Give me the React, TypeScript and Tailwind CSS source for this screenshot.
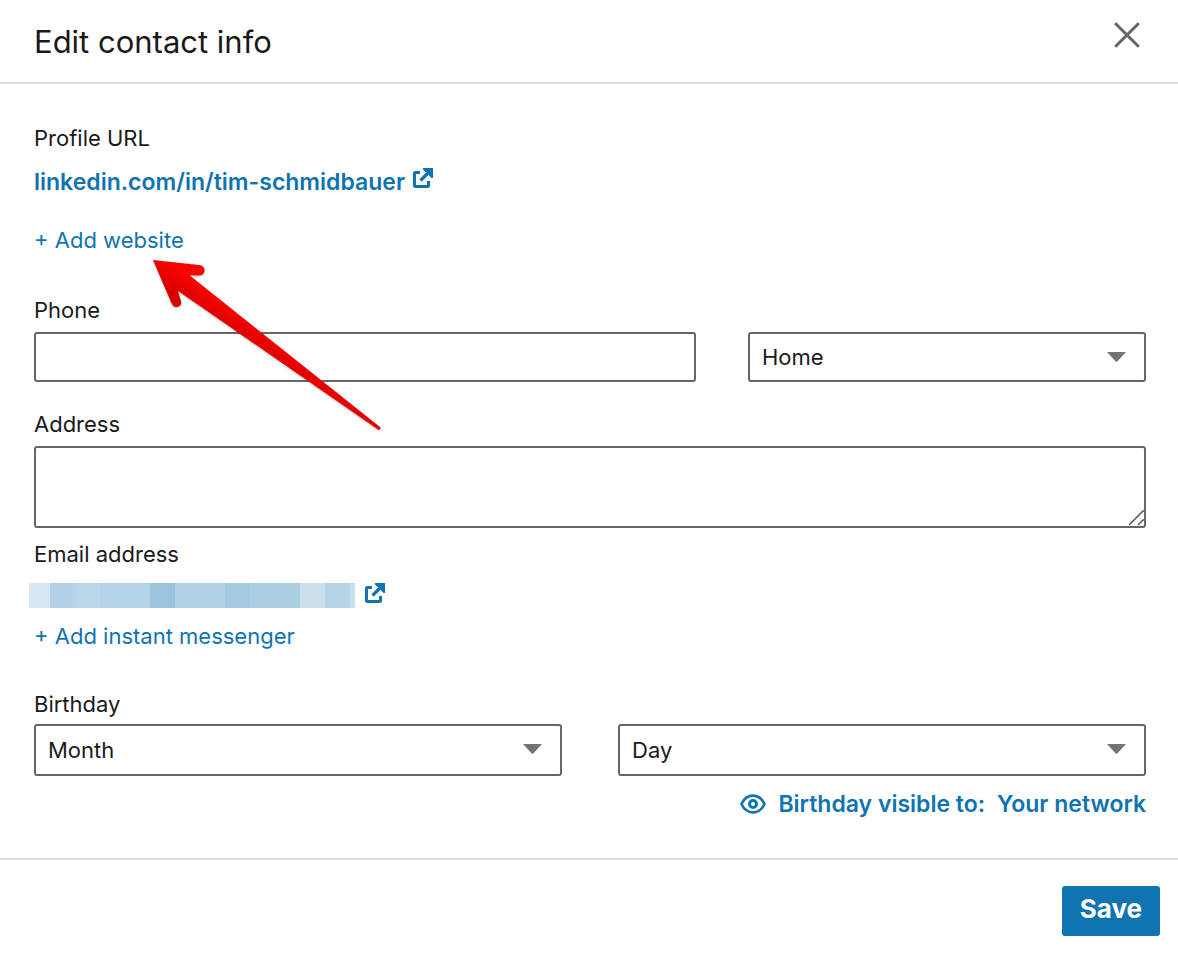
import { useState, type SelectHTMLAttributes } from 'react'

const MONTHS = ['January', 'February', 'March', 'April', 'May', 'June', 'July', 'August', 'September', 'October', 'November', 'December']
const DAYS = Array.from({ length: 31 }, (_, i) => String(i + 1))

function ExternalLinkIcon() {
  return (
    <svg className="w-5 h-5 shrink-0" viewBox="0 0 20 20" fill="none" stroke="currentColor" strokeWidth="3" aria-hidden="true">
      <path d="M7 4.500H2.500a1 1 0 0 0-1 1v12a1 1 0 0 0 1 1h12a1 1 0 0 0 1-1v-4.500" />
      <path d="M7.500 12.500 17 3" strokeWidth="3.200" />
      <path d="M10 0h10v10h-1.500l-2.500-2.500V4h-3.500L10 1.500z" fill="currentColor" stroke="none" />
    </svg>
  )
}

function EyeIcon() {
  return (
    <svg className="w-[26px] h-5 shrink-0" viewBox="0 0 26 20" fill="none" stroke="currentColor" aria-hidden="true">
      <path d="M1.500 10C4 4.500 8.200 1.600 13 1.600S22 4.500 24.500 10C22 15.500 17.800 18.400 13 18.400S4 15.500 1.500 10z" strokeWidth="2.600" />
      <circle cx="13" cy="10" r="3.500" strokeWidth="3" />
    </svg>
  )
}

function Arrow() {
  return (
    <svg
      className="absolute top-[33px] left-[118px] w-[232px] h-[174px] pointer-events-none drop-shadow-[0_1px_1px_rgba(0,0,0,0.25)]"
      viewBox="0 0 232 174"
      aria-hidden="true"
    >
      <defs>
        <linearGradient id="arrow-fill" gradientUnits="userSpaceOnUse" x1="72" y1="44" x2="60" y2="61">
          <stop offset="0" stopColor="#f50404" />
          <stop offset="1" stopColor="#d90000" />
        </linearGradient>
      </defs>
      <path
        d="M1 1 47 6C51 6.500 53 9 52.500 12S50 16.500 46.500 16.500L37.500 16.300 228 168C229.500 169.500 227.800 171.500 226 170.500L25.800 31.700 29 42C29.800 45 28 47.500 25 48S20.500 46.500 19 43z"
        fill="url(#arrow-fill)"
      />
    </svg>
  )
}

function Select({ label, options, className = '', ...props }: SelectHTMLAttributes<HTMLSelectElement> & { label: string; options: string[] }) {
  return (
    <div className="relative">
      <select
        aria-label={label}
        className={`block w-full appearance-none rounded-[3px] border-2 border-[#666] bg-white pl-3 pr-12 ${className}`}
        {...props}
      >
        {options.map((option) => (
          <option key={option}>{option}</option>
        ))}
      </select>
      <svg className="absolute right-5 top-5 w-[19px] h-[10px] pointer-events-none" viewBox="0 0 19 10" aria-hidden="true">
        <path d="M0 0h19l-8.500 9.300q-1 .9-2 0z" fill="#737373" />
      </svg>
    </div>
  )
}

// The address is redacted, so only coloured blocks are shown
function RedactedEmail() {
  return (
    <span role="img" aria-label="Hidden email address" className="flex w-[326px] h-[25px] -ml-[5px]">
      <span className="w-[21px] bg-[#d6e7f1]" />
      <span className="w-[25px] bg-[#b4d2e7]" />
      <span className="w-[25px] bg-[#bbd6e8]" />
      <span className="w-[50px] bg-[#b3d3e6]" />
      <span className="w-[25px] bg-[#9bc3de]" />
      <span className="w-[50px] bg-[#b1d1e5]" />
      <span className="w-[25px] bg-[#a5c9e0]" />
      <span className="w-[50px] bg-[#abcee3]" />
      <span className="w-[25px] bg-[#cbe0ed]" />
      <span className="w-[25px] bg-[#b4d3e6]" />
      <span className="w-[5px] bg-[#c9dfec]" />
    </span>
  )
}

export default function App() {
  const [phone, setPhone] = useState('')
  const [address, setAddress] = useState('')

  return (
    <form
      className="min-h-screen bg-white font-['Inter','Liberation_Sans',sans-serif] text-[22px] leading-7 text-[#1a1a1a]"
      onSubmit={(e) => e.preventDefault()}
    >
      <header className="flex items-start justify-between border-b-2 border-[#dedede] pl-[34px] pr-[38px] pt-[22px] pb-5">
        <h1 className="text-[31px] leading-10">Edit contact info</h1>
        <button type="button" aria-label="Close" className="text-[#666]">
          <svg className="w-[26px] h-[26px]" viewBox="0 0 26 26" fill="none" stroke="currentColor" strokeWidth="3">
            <path d="M1.200 1.200l23.600 23.600M24.800 1.200 1.200 24.800" />
          </svg>
        </button>
      </header>

      <main className="pl-[34px] pr-8 pt-10 pb-10">
        <section>
          <h2>Profile URL</h2>
          <a href="#profile" className="mt-4 flex w-fit items-start gap-2 text-[23px] leading-7 font-semibold text-[#1074b0]">
            linkedin.com/in/tim-schmidbauer
            <ExternalLinkIcon />
          </a>
          <div className="relative mt-[30px]">
            <button type="button" className="block text-[#1074b0]">+ Add website</button>
            <Arrow />
          </div>
        </section>

        <section className="mt-[42px]">
          <label htmlFor="phone" className="block">Phone</label>
          <div className="mt-2 grid grid-cols-[331fr_199fr] gap-[52px]">
            <input
              id="phone"
              type="tel"
              value={phone}
              onChange={(e) => setPhone(e.target.value)}
              className="h-[50px] w-full rounded-[3px] border-2 border-[#666] px-3"
            />
            <Select label="Phone type" options={['Home', 'Work', 'Mobile']} className="h-[50px]" />
          </div>
        </section>

        <section className="mt-7">
          <label htmlFor="address" className="block">Address</label>
          <div className="relative mt-2">
            <textarea
              id="address"
              value={address}
              onChange={(e) => setAddress(e.target.value)}
              className="block h-[82px] w-full resize-none rounded-[3px] border-2 border-[#666] px-3 py-2"
            />
            <svg className="absolute bottom-[2px] right-[1px] w-4 h-4 pointer-events-none" viewBox="0 0 16 16" fill="none" stroke="#555" strokeWidth="1.500" aria-hidden="true">
              <path d="M0 15 14 1h1M9 15l5-5h1" />
            </svg>
          </div>
        </section>

        <section className="mt-3">
          <h2>Email address</h2>
          <a href="#email" className="mt-[15px] flex w-fit items-start gap-[10px] text-[#1074b0]">
            <RedactedEmail />
            <ExternalLinkIcon />
          </a>
          <button type="button" className="mt-[14px] block text-[#1074b0]">+ Add instant messenger</button>
        </section>

        <section className="mt-10">
          <h2>Birthday</h2>
          <div className="mt-[6px] grid grid-cols-2 gap-14">
            <Select label="Birthday month" options={['Month', ...MONTHS]} className="h-[52px]" />
            <Select label="Birthday day" options={['Day', ...DAYS]} className="h-[52px]" />
          </div>
          <button type="button" className="mt-[14px] ml-auto flex items-center text-[23px] leading-7 font-semibold text-[#1074b0]">
            <EyeIcon />
            <span className="ml-3">Birthday visible to:</span>
            <span className="ml-3">Your network</span>
          </button>
        </section>
      </main>

      <footer className="flex justify-end border-t-2 border-[#dedede] px-[18px] pt-[26px] pb-[22px]">
        <button type="submit" className="h-[50px] rounded-[3px] bg-[#1074b0] px-[18px] pb-1 text-[26px] font-bold text-white">
          Save
        </button>
      </footer>
    </form>
  )
}
